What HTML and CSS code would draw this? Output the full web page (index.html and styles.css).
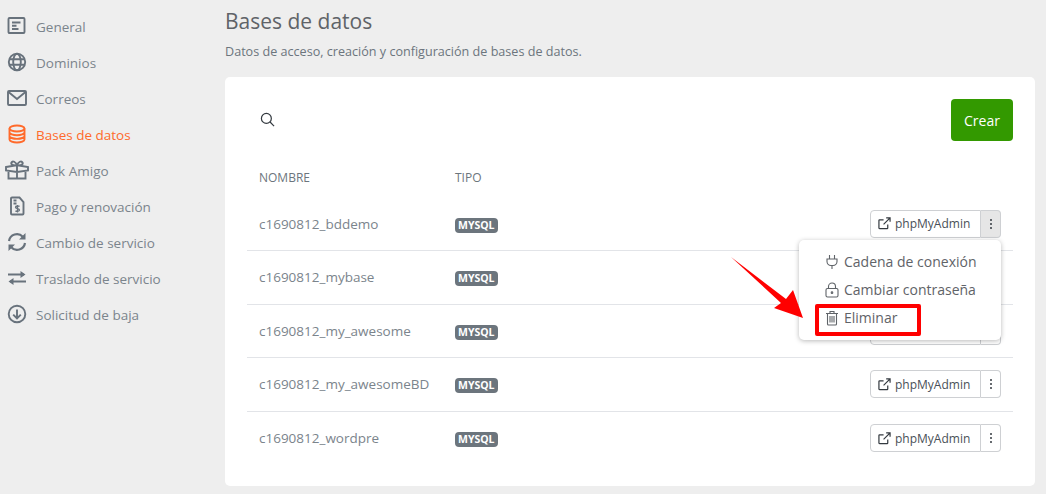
FILE: index.html
```html
<!DOCTYPE html>
<html lang="en">
<head>
    <meta charset="UTF-8">
    <meta name="viewport" content="width=device-width, initial-scale=1.0">
    <title>Bases de datos</title>
    <link rel="stylesheet" href="styles.css">
</head>
<body>
    <div class="layout">
        <nav class="side-nav">
            <a class="nav-item" href="#">
                <svg viewBox="0 0 20 20"><rect x="1.500" y="2" width="16" height="15" rx="1"/><path d="M5 6.500h8.500M5 9.800h4.500M5 13h6.500"/></svg>
                General
            </a>
            <a class="nav-item" href="#">
                <svg viewBox="0 0 20 20"><circle cx="10" cy="10" r="8.200"/><ellipse cx="10" cy="10" rx="3.800" ry="8.200"/><path d="M2.200 7.300h15.600M2.200 12.700h15.600"/></svg>
                Dominios
            </a>
            <a class="nav-item" href="#">
                <svg viewBox="0 0 20 20"><rect x="1" y="3" width="18" height="14" rx="1"/><path d="M1.500 4 10 11l8.500-7"/></svg>
                Correos
            </a>
            <a class="nav-item active" href="#">
                <svg viewBox="0 0 20 20"><ellipse cx="10" cy="4.500" rx="7.500" ry="3"/><path d="M2.500 4.500v11c0 1.600 3.400 3 7.500 3s7.500-1.400 7.500-3v-11M2.500 8.200c0 1.600 3.400 3 7.500 3s7.500-1.400 7.500-3M2.500 11.900c0 1.600 3.400 3 7.500 3s7.500-1.400 7.500-3"/></svg>
                Bases de datos
            </a>
            <a class="nav-item" href="#">
                <svg class="wide" viewBox="0 0 24 20"><path d="M1 7l9-1.500h4L23 7v3.500L12 12 1 10.500zM3.500 11v7.500h17V11M12 5.500v13M12 5.500C8.500 6 5.500 4.500 6.500 2.500S11 1.500 12 5.500c1-4 4.500-5 5.500-3S15.500 6 12 5.500"/></svg>
                Pack Amigo
            </a>
            <a class="nav-item" href="#">
                <svg viewBox="0 0 20 20"><path d="M5 1.500h7.500L16.500 6v11.500a1 1 0 0 1-1 1H5a1 1 0 0 1-1-1v-15a1 1 0 0 1 1-1zM6.500 4.500h3M6.500 7.500h3"/><path class="slim" d="M12.500 10.500c-.6-.7-4-.9-4 .8s4 1.100 4 2.800-3.300 1.400-4 .6M10.500 9v7.500"/></svg>
                Pago y renovación
            </a>
            <a class="nav-item" href="#">
                <svg class="thick" viewBox="0 0 20 20"><path d="M2 9a8 8 0 0 1 13.800-4.200M18 11a8 8 0 0 1-13.800 4.200"/><path class="solid" d="M18.500 1v6.500H12zM1.500 19v-6.500H8z"/></svg>
                Cambio de servicio
            </a>
            <a class="nav-item" href="#">
                <svg class="thick" viewBox="0 0 20 20"><path d="M1 6.500h16M3 13.500h16"/><path class="solid" d="M13.500 3l5 3.500-5 3.500zM6.500 10l-5 3.500 5 3.500z"/></svg>
                Traslado de servicio
            </a>
            <a class="nav-item" href="#">
                <svg viewBox="0 0 20 20"><circle cx="10" cy="10" r="8.300"/><path d="M10 5.500v9M6.200 10.700 10 14.500l3.800-3.800"/></svg>
                Solicitud de baja
            </a>
        </nav>

        <main class="content">
            <h1 class="page-title">Bases de datos</h1>
            <p class="page-desc">Datos de acceso, creación y configuración de bases de datos.</p>

            <section class="card">
                <div class="toolbar">
                    <svg class="search-icon" viewBox="0 0 16 16"><circle cx="6.800" cy="6.800" r="5.300"/><path d="m10.700 10.700 4.300 4.300"/></svg>
                    <button class="btn-create">Crear</button>
                </div>

                <div class="db-row db-head">
                    <span class="col-name">Nombre</span>
                    <span class="col-type">Tipo</span>
                </div>

                <div class="db-row">
                    <span class="col-name">c1690812_bddemo</span>
                    <span class="col-type"><span class="badge">MYSQL</span></span>
                    <div class="actions">
                        <a class="btn-admin" href="#">
                            <svg viewBox="0 0 14 14"><path d="M10.500 8v3.800a.7.700 0 0 1-.7.700H1.700a.7.700 0 0 1-.7-.7V3.700a.7.700 0 0 1 .7-.7H6M6 8l7-7M8.800 1H13v4.200"/></svg>
                            phpMyAdmin
                        </a>
                        <button class="btn-more open"><span></span><span></span><span></span></button>
                        <div class="dropdown">
                            <a class="drop-item" href="#">
                                <svg viewBox="0 0 14 16"><path d="M4.500 1v4M9.500 1v4M2 5h10v2.500a4 4 0 0 1-4 4H6a4 4 0 0 1-4-4zM7 11.500V15"/></svg>
                                Cadena de conexión
                            </a>
                            <a class="drop-item" href="#">
                                <svg viewBox="0 0 14 16"><rect x="1" y="6.500" width="12" height="8.500" rx="1.500"/><path d="M3.500 6.500V4.500a3.500 3.500 0 0 1 7 0v2"/><circle cx="7" cy="10.700" r=".8"/></svg>
                                Cambiar contraseña
                            </a>
                            <a class="drop-item" href="#">
                                <svg viewBox="0 0 14 16"><path d="M1 3.500h12M5 3.500V1.500h4v2M2.500 3.500V14a1 1 0 0 0 1 1h7a1 1 0 0 0 1-1V3.500M5 6v6.500M7 6v6.500M9 6v6.500"/></svg>
                                Eliminar
                            </a>
                        </div>
                        <div class="highlight"></div>
                        <svg class="red-arrow" viewBox="0 0 76 66"><path d="M0 0 55 42 62 33 72 61 43 51 50 46z"/></svg>
                    </div>
                </div>

                <div class="db-row">
                    <span class="col-name">c1690812_mybase</span>
                    <span class="col-type"><span class="badge">MYSQL</span></span>
                    <!-- buttons of this row are behind the open menu -->
                    <div class="actions covered">
                        <a class="btn-admin" href="#">
                            <svg viewBox="0 0 14 14"><path d="M10.500 8v3.800a.7.700 0 0 1-.7.700H1.700a.7.700 0 0 1-.7-.7V3.700a.7.700 0 0 1 .7-.7H6M6 8l7-7M8.800 1H13v4.200"/></svg>
                            <span>phpMyAdmin</span>
                        </a>
                        <button class="btn-more"><span></span><span></span><span></span></button>
                    </div>
                </div>

                <div class="db-row">
                    <span class="col-name">c1690812_my_awesome</span>
                    <span class="col-type"><span class="badge">MYSQL</span></span>
                    <div class="actions covered-part">
                        <a class="btn-admin" href="#">
                            <svg viewBox="0 0 14 14"><path d="M10.500 8v3.800a.7.700 0 0 1-.7.700H1.700a.7.700 0 0 1-.7-.7V3.700a.7.700 0 0 1 .7-.7H6M6 8l7-7M8.800 1H13v4.200"/></svg>
                            <span>phpMyAdmin</span>
                        </a>
                        <button class="btn-more"><span></span><span></span><span></span></button>
                    </div>
                </div>

                <div class="db-row">
                    <span class="col-name">c1690812_my_awesomeBD</span>
                    <span class="col-type"><span class="badge">MYSQL</span></span>
                    <div class="actions">
                        <a class="btn-admin" href="#">
                            <svg viewBox="0 0 14 14"><path d="M10.500 8v3.800a.7.700 0 0 1-.7.700H1.700a.7.700 0 0 1-.7-.7V3.700a.7.700 0 0 1 .7-.7H6M6 8l7-7M8.800 1H13v4.200"/></svg>
                            phpMyAdmin
                        </a>
                        <button class="btn-more"><span></span><span></span><span></span></button>
                    </div>
                </div>

                <div class="db-row">
                    <span class="col-name">c1690812_wordpre</span>
                    <span class="col-type"><span class="badge">MYSQL</span></span>
                    <div class="actions">
                        <a class="btn-admin" href="#">
                            <svg viewBox="0 0 14 14"><path d="M10.500 8v3.800a.7.700 0 0 1-.7.700H1.700a.7.700 0 0 1-.7-.7V3.700a.7.700 0 0 1 .7-.7H6M6 8l7-7M8.800 1H13v4.200"/></svg>
                            phpMyAdmin
                        </a>
                        <button class="btn-more"><span></span><span></span><span></span></button>
                    </div>
                </div>
            </section>
        </main>
    </div>
</body>
</html>
```

FILE: styles.css
```css
body {
    font-family: "Open Sans", sans-serif;
    margin: 0;
    padding: 0;
    background-color: #eeeeee;
    color: #6c757d;
    overflow: hidden;
    height: 494px;
}

svg {
    fill: none;
    stroke: currentColor;
}

.layout {
    display: flex;
}

/* sidebar */
.side-nav {
    width: 225px;
    flex-shrink: 0;
    padding-top: 9px;
}

.nav-item {
    display: flex;
    align-items: center;
    height: 36px;
    padding-left: 7px;
    font-size: 13.500px;
    color: #7b848c;
    text-decoration: none;
}

.nav-item svg {
    width: 20px;
    height: 20px;
    margin-top: -2px;
    margin-right: 9px;
    color: #68727c;
    stroke-width: 1.900;
    flex-shrink: 0;
}

.nav-item svg.wide {
    width: 24px;
    margin-left: -2px;
    margin-right: 7px;
    stroke-width: 1.900;
}

.nav-item svg.thick {
    stroke-width: 2.200;
}

.nav-item svg .solid {
    fill: currentColor;
    stroke: none;
}

.nav-item svg .slim {
    stroke-width: 1.300;
}

.nav-item.active,
.nav-item.active svg {
    color: #ff6a2b;
}

/* main */
.content {
    width: 810px;
}

.page-title {
    margin: 0;
    padding-top: 6px;
    font-size: 21px;
    line-height: 30px;
    font-weight: 400;
    color: #5f6368;
}

.page-desc {
    margin: 7px 0 0;
    font-size: 12.600px;
    line-height: 18px;
    color: #6c757d;
}

.card {
    margin-top: 16px;
    height: 409px;
    padding: 22px 22px 0;
    box-sizing: border-box;
    background-color: #fff;
    border-radius: 5px;
}

.toolbar {
    display: flex;
    align-items: center;
    justify-content: space-between;
    padding-left: 13px;
    height: 42px;
}

.search-icon {
    width: 15px;
    height: 15px;
    margin-bottom: 2px;
    color: #343a40;
    stroke-width: 1.300;
}

.btn-create {
    width: 62px;
    height: 42px;
    border: none;
    border-radius: 4px;
    background-color: #339900;
    color: #fff;
    font-family: inherit;
    font-size: 14px;
    font-weight: 500;
}

.db-row {
    display: flex;
    align-items: center;
    height: 53.500px;
    box-sizing: border-box;
    padding: 0 12px;
    border-bottom: 1px solid #e2e4e8;
    font-size: 13.500px;
    color: #7b848c;
}

.db-row:last-child {
    border-bottom: none;
}

.db-head {
    height: 56.500px;
    padding-top: 15.500px;
    border-bottom: none;
    font-size: 12px;
    text-transform: uppercase;
    color: #6c757d;
}

.col-name {
    width: 196px;
    flex-shrink: 0;
}

.col-type {
    flex-shrink: 0;
}

.badge {
    display: inline-block;
    padding: 0 3px;
    height: 15px;
    line-height: 15px;
    border-radius: 4px;
    background-color: #6c757d;
    color: #fff;
    font-size: 10.500px;
    font-weight: 700;
}

.actions {
    position: relative;
    display: flex;
    margin-left: auto;
}

/* rows under the open menu */
.actions.covered {
    visibility: hidden;
}

.actions.covered-part .btn-admin span {
    visibility: hidden;
}

.btn-admin {
    display: flex;
    align-items: center;
    box-sizing: border-box;
    width: 111px;
    height: 28px;
    padding-left: 7px;
    border: 1px solid #ced0d3;
    border-radius: 4px 0 0 4px;
    font-size: 12px;
    color: #495057;
    text-decoration: none;
}

.btn-admin svg {
    width: 13px;
    height: 13px;
    margin-right: 4px;
    stroke-width: 1.300;
    color: #343a40;
}

.btn-more {
    display: flex;
    flex-direction: column;
    align-items: center;
    justify-content: center;
    gap: 2px;
    box-sizing: border-box;
    width: 20px;
    height: 28px;
    padding: 0;
    border: 1px solid #ced0d3;
    border-left: none;
    border-radius: 0 4px 4px 0;
    background-color: #fff;
}

.btn-more.open {
    background-color: #e6e6e6;
}

.btn-more span {
    width: 2px;
    height: 2px;
    border-radius: 1px;
    background-color: #343a40;
}

.dropdown {
    position: absolute;
    top: 30px;
    right: 0;
    z-index: 2;
    width: 202px;
    height: 100px;
    box-sizing: border-box;
    padding-top: 8px;
    background-color: #fff;
    border-radius: 5px;
    box-shadow: 0 1px 5px rgba(0, 0, 0, 0.28);
}

.drop-item {
    display: flex;
    align-items: center;
    height: 28px;
    padding-left: 26px;
    font-size: 14px;
    color: #5f6368;
    text-decoration: none;
}

.drop-item svg {
    width: 14px;
    height: 16px;
    margin-right: 5px;
    stroke-width: 1.100;
    color: #5f6368;
}

.highlight {
    position: absolute;
    z-index: 3;
    top: 94px;
    right: 80px;
    width: 106px;
    height: 32px;
    box-sizing: border-box;
    border: 4px solid #ff0000;
    border-radius: 2px;
}

.red-arrow {
    position: absolute;
    z-index: 3;
    top: 47px;
    left: -139px;
    width: 76px;
    height: 66px;
    stroke: none;
    fill: #ff0000;
}
```
